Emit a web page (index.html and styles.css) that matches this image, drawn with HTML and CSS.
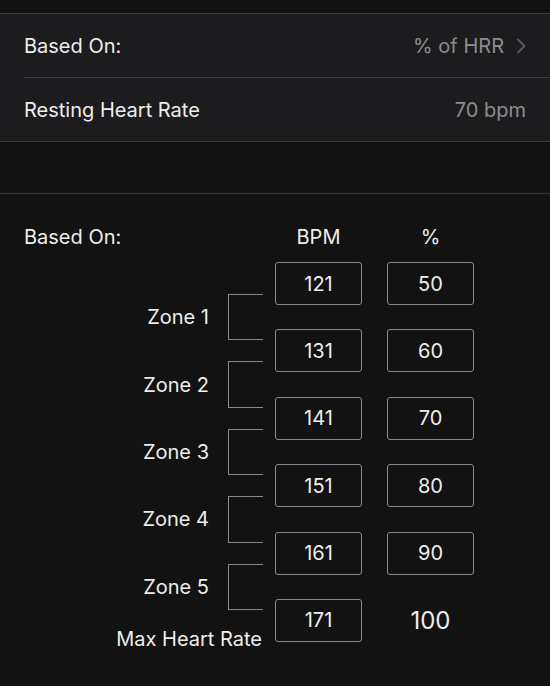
FILE: index.html
```html
<!DOCTYPE html>
<html>
<head>
<meta charset="utf-8">
<link rel="stylesheet" href="styles.css">
</head>
<body>
<div class="top-gap"></div>
<div class="group">
  <div class="row">
    <span class="row-label">Based On:</span>
    <span class="row-value">% of HRR
      <svg class="chev" width="10" height="16" viewBox="0 0 10 16"><path d="M2 1.5 L8.5 8 L2 14.5" fill="none" stroke="#5c5c60" stroke-width="1.8" stroke-linecap="round" stroke-linejoin="round"/></svg>
    </span>
  </div>
  <div class="sep"></div>
  <div class="row">
    <span class="row-label">Resting Heart Rate</span>
    <span class="row-value plain">70 bpm</span>
  </div>
</div>
<div class="mid-gap"></div>
<div class="zones">
  <div class="zhead based">Based On:</div>
  <div class="zhead bpm-h">BPM</div>
  <div class="zhead pct-h">%</div>

  <div class="box bpm r1">121</div><div class="box pct r1">50</div>
  <div class="zlabel g1">Zone 1</div><div class="bracket b1"></div>
  <div class="box bpm r2">131</div><div class="box pct r2">60</div>
  <div class="zlabel g2">Zone 2</div><div class="bracket b2"></div>
  <div class="box bpm r3">141</div><div class="box pct r3">70</div>
  <div class="zlabel g3">Zone 3</div><div class="bracket b3"></div>
  <div class="box bpm r4">151</div><div class="box pct r4">80</div>
  <div class="zlabel g4">Zone 4</div><div class="bracket b4"></div>
  <div class="box bpm r5">161</div><div class="box pct r5">90</div>
  <div class="zlabel g5">Zone 5</div><div class="bracket b5"></div>
  <div class="box bpm r6">171</div><div class="pct-plain r6">100</div>
  <div class="maxhr">Max Heart Rate</div>
</div>
</body>
</html>
```
FILE: styles.css
```css
html, body {
  margin: 0;
  padding: 0;
  background: #121212;
  color: #ededed;
  font-family: "Inter", "Roboto", "Liberation Sans", sans-serif;
  font-size: 20px;
}
.top-gap {
  height: 13px;
  border-bottom: 1px solid #3a3a3c;
}
.group {
  background: #1c1c1e;
  border-bottom: 1px solid #3a3a3c;
}
.row {
  height: 63px;
  display: flex;
  align-items: center;
  justify-content: space-between;
  padding: 0 24px 0 24px;
}
.sep {
  height: 1px;
  margin-left: 23px;
  background: #3a3a3c;
}
.row-value {
  color: #8d8d92;
  display: flex;
  align-items: center;
}
.chev {
  display: block;
  margin-left: 12px;
}
.mid-gap {
  height: 51px;
  border-bottom: 1px solid #3a3a3c;
}
.zones {
  display: grid;
  grid-template-columns: 209px 66px 87px 112px;
  grid-template-rows: 24px 13px 43px 24.4px 43px 24.4px 43px 24.4px 43px 24.4px 43px 24.4px 43px 9px;
  padding-top: 31px;
  align-items: center;
}
.zhead { grid-row: 1; line-height: 24px; }
.based { grid-column: 1; padding-left: 24px; }
.bpm-h { grid-column: 3; text-align: center; }
.pct-h { grid-column: 4; justify-self: end; width: 87px; text-align: center; }
.box {
  height: 43px;
  box-sizing: border-box;
  border: 1.5px solid #8a8a8a;
  border-radius: 3px;
  display: flex;
  align-items: center;
  justify-content: center;
}
.bpm { grid-column: 3; }
.pct { grid-column: 4; justify-self: end; width: 87px; }
.pct-plain {
  grid-column: 4; justify-self: end; width: 87px; text-align: center;
  font-size: 24px;
}
.r1 { grid-row: 3; } .r2 { grid-row: 5; } .r3 { grid-row: 7; }
.r4 { grid-row: 9; } .r5 { grid-row: 11; } .r6 { grid-row: 13; }
.zlabel {
  grid-column: 1;
  text-align: right;
  line-height: 24px;
}
.g1 { grid-row: 4; } .g2 { grid-row: 6; } .g3 { grid-row: 8; }
.g4 { grid-row: 10; } .g5 { grid-row: 12; }
.bracket {
  grid-column: 2;
  align-self: stretch;
  margin: 32px 12px 32px 19px;
  border: 1.5px solid #8a8a8a;
  border-right: none;
}
.b1 { grid-row: 3 / span 3; } .b2 { grid-row: 5 / span 3; }
.b3 { grid-row: 7 / span 3; } .b4 { grid-row: 9 / span 3; }
.b5 { grid-row: 11 / span 3; }
.maxhr {
  grid-row: 13 / span 2;
  grid-column: 1 / span 2;
  justify-self: end;
  margin-right: 13px;
  align-self: end;
  line-height: 24px;
}
```
